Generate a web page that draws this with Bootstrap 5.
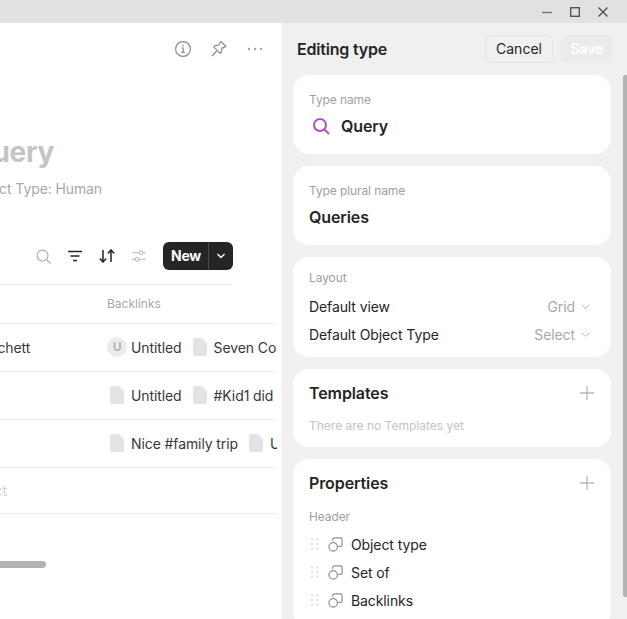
<!DOCTYPE html>
<html lang="en">
<head>
    <meta charset="UTF-8">
    <meta name="viewport" content="width=device-width, initial-scale=1.0">
    <title>Editing type</title>
    <link href="https://cdn.jsdelivr.net/npm/bootstrap@5.3.0/dist/css/bootstrap.min.css" rel="stylesheet">
    <style>
        html, body { height: 100%; overflow: hidden; }
        body { font-family: Inter, "Liberation Sans", sans-serif; font-size: 14px; letter-spacing: -0.1px; color: #252525; background: #f0f0f0; }
        svg { display: block; flex: none; }
        .app-shell { height: 619px; }
        .title-strip { height: 23px; background: #e1e1e1; padding-right: 19px; gap: 18px; }
        .work-area { height: 596px; }

        .main-pane { width: 281px; background: #fff; overflow: hidden; }
        .top-actions { height: 52px; padding-right: 17px; gap: 18px; }
        .page-head { margin-left: -29px; white-space: nowrap; height: 127px; padding-top: 60px; }
        .page-name { font-size: 28px; line-height: 34px; font-weight: 700; color: #c4c4c4; letter-spacing: -0.3px; margin: 0; }
        .page-sub { font-size: 14px; line-height: 20px; color: #a8a8a8; margin-top: 10px; margin-left: -53px; }
        .view-tools { width: 233px; height: 28px; margin-top: 40px; }
        .new-split { background: #252525; color: #fff; border-radius: 6px; height: 28px; width: 70px; font-weight: 700; letter-spacing: -0.2px; }
        .new-label { width: 46px; padding-left: 1px; text-align: center; border-right: 1px solid #4a4a4a; line-height: 28px; }
        .tool-gap { gap: 17px; margin-right: 17px; }
        .view-rule { width: 233px; border-top: 1px solid #ececec; margin-top: 14px; }
        .grid-box { width: 277px; overflow: hidden; }
        .grid-line { height: 48px; padding-bottom: 1px; border-bottom: 1px solid #ececec; white-space: nowrap; }
        .grid-head { height: 39px; font-size: 12px; letter-spacing: 0; color: #a8a8a8; padding-left: 107px; }
        .name-cell { width: 107px; flex: none; color: #383838; }
        .link-cell { color: #383838; }
        .link-cell > span { margin-right: 8px; }
        .u-avatar { width: 20px; height: 20px; border-radius: 50%; background: #ececec; color: #b0b0b0; font-size: 12px; font-weight: 600; line-height: 20px; text-align: center; margin-right: 4px; }
        .doc-ico { margin-left: 3px; margin-right: 7px; }
        .add-line { height: 46px; color: #cfcfcf; white-space: nowrap; }
        .h-thumb { width: 46px; height: 7px; background: #b2b2b2; border-radius: 0 4px 4px 0; margin-top: 47px; }

        .side-pane { width: 346px; position: relative; border-left: 1px solid #f6f6f6; padding: 0 16px 0 11px; }
        .side-head { height: 52px; margin-right: -2px; }
        .side-title { font-size: 16px; font-weight: 600; letter-spacing: -0.2px; color: #252525; margin-left: 4px; }
        .btn-cancel { height: 28px; width: 68px; padding: 0 0 1px; font-size: 14px; border: 1px solid #e3e3e3; border-radius: 6px; color: #252525; background: transparent; }
        .btn-save { height: 28px; width: 52px; padding: 0 0 1px; font-size: 14px; font-weight: 600; border: 0; border-radius: 6px; color: #fff; background: #ebebeb; margin-left: 8px; }
        .panel-box { width: 318px; background: #fff; border-radius: 16px; padding: 16px; margin-bottom: 12px; }
        .panel-tight { padding-top: 12px; padding-bottom: 8px; }
        .panel-mid { padding-top: 12px; padding-bottom: 12px; }
        .mini-label { font-size: 12px; line-height: 18px; color: #a0a0a0; }
        .big-value { font-size: 16px; line-height: 24px; font-weight: 600; color: #252525; }
        .value-gap { margin-top: 5px; }
        .panel-title { font-size: 16px; line-height: 24px; font-weight: 600; color: #252525; }
        .opt-head { margin-bottom: 6px; }
        .opt-line { height: 28px; padding-bottom: 2px; }
        .opt-val { color: #a8a8a8; gap: 6px; margin-right: 5px; }
        .none-yet { font-size: 12px; line-height: 18px; letter-spacing: 0; color: #c4c4c4; margin-top: 12px; }
        .prop-head { margin-top: 13px; margin-bottom: 5px; }
        .prop-line { height: 28px; padding-bottom: 2px; }
        .prop-ico { margin-left: 1px; }
        .v-thumb { position: absolute; right: 0; top: 52px; width: 4px; height: 522px; background: #b2b2b2; border-radius: 2px 0 0 2px; }
    </style>
</head>
<body>
    <div class="app-shell d-flex flex-column">
        <div class="title-strip d-flex align-items-center justify-content-end">
            <svg width="10" height="10" viewBox="0 0 10 10"><path d="M0 5.5h10" stroke="#777" stroke-width="1.4"/></svg>
            <svg width="10" height="10" viewBox="0 0 10 10"><rect x=".7" y=".7" width="8.6" height="8.6" fill="none" stroke="#555" stroke-width="1.4"/></svg>
            <svg width="10" height="10" viewBox="0 0 10 10"><path d="M.5.5l9 9M9.500.5l-9 9" stroke="#444" stroke-width="1.1"/></svg>
        </div>

        <div class="work-area d-flex">
            <div class="main-pane">
                <div class="top-actions d-flex align-items-center justify-content-end">
                    <svg width="18" height="18" viewBox="0 0 18 18" fill="none" stroke="#8a8a8a" stroke-width="1.2"><circle cx="9" cy="9" r="7.400"/><path d="M7.500 8h1.700v4.300M7.300 12.400h3.600" /><path d="M9 5v1.300" stroke-width="1.500"/></svg>
                    <svg width="18" height="18" viewBox="0 0 18 18" fill="none" stroke="#8a8a8a" stroke-width="1.2" stroke-linejoin="round"><path d="M11 1.500l5 5-1.300.6-2.700 1-.6 4-1.200 1.200-6.500-6.500L4.900 5.600l4-.6 1.400-2.700z"/><path d="M6.700 11l-4.700 5"/></svg>
                    <svg width="18" height="18" viewBox="0 0 18 18" fill="#a6a6a6"><circle cx="3" cy="9" r="1.200"/><circle cx="9" cy="9" r="1.200"/><circle cx="15" cy="9" r="1.200"/></svg>
                </div>
                <div class="page-head">
                    <h1 class="page-name">Query</h1>
                    <div class="page-sub">Default Object Type: Human</div>
                </div>
                <div class="view-tools d-flex align-items-center justify-content-end">
                    <div class="tool-gap d-flex align-items-center">
                        <svg width="15" height="15" viewBox="0 0 16 16" fill="none" stroke="#ababab" stroke-width="1.200"><circle cx="7" cy="7" r="5.800"/><path d="M11.200 11.200l4.300 4.300"/></svg>
                        <svg width="14" height="12" viewBox="0 0 14 12" fill="none" stroke="#252525" stroke-width="1.500"><path d="M0 1.500h14M2.500 6h9M5 10.500h4"/></svg>
                        <svg width="16" height="14" viewBox="0 0 16 14" fill="none" stroke="#252525" stroke-width="1.500"><path d="M4 1v12M.8 9.500L4 13l3.200-3.500M12 13V1M8.800 4.500L12 1l3.200 3.500"/></svg>
                        <svg width="14" height="14" viewBox="0 0 15 14" fill="none" stroke="#b8b8b8" stroke-width="1.100"><path d="M0 3.500h7.500M11.500 3.500H15M0 10.500h3.500M7.500 10.500H15"/><circle cx="9.500" cy="3.500" r="2"/><circle cx="5.500" cy="10.500" r="2"/></svg>
                    </div>
                    <div class="new-split d-flex align-items-center">
                        <div class="new-label">New</div>
                        <div class="flex-grow-1 d-flex justify-content-center">
                            <svg width="10" height="6" viewBox="0 0 10 6" fill="none" stroke="#fff" stroke-width="1.400"><path d="M1.500 1L5 4.500 8.500 1"/></svg>
                        </div>
                    </div>
                </div>
                <div class="view-rule"></div>
                <div class="grid-box">
                    <div class="grid-line grid-head d-flex align-items-center">Backlinks</div>
                    <div class="grid-line d-flex align-items-center">
                        <div class="name-cell"><span class="d-block" style="margin-left:-67px">Terry Pratchett</span></div>
                        <div class="link-cell d-flex align-items-center">
                            <div class="u-avatar">U</div><span>Untitled</span>
                            <svg class="doc-ico" width="14" height="18" viewBox="0 0 14 18"><path d="M2 0h7l5 5v11a2 2 0 0 1-2 2H2a2 2 0 0 1-2-2V2a2 2 0 0 1 2-2z" fill="#e4e4e4"/></svg><span>Seven Colors</span>
                        </div>
                    </div>
                    <div class="grid-line d-flex align-items-center">
                        <div class="name-cell"></div>
                        <div class="link-cell d-flex align-items-center">
                            <svg class="doc-ico" width="14" height="18" viewBox="0 0 14 18"><path d="M2 0h7l5 5v11a2 2 0 0 1-2 2H2a2 2 0 0 1-2-2V2a2 2 0 0 1 2-2z" fill="#e4e4e4"/></svg><span>Untitled</span>
                            <svg class="doc-ico" width="14" height="18" viewBox="0 0 14 18"><path d="M2 0h7l5 5v11a2 2 0 0 1-2 2H2a2 2 0 0 1-2-2V2a2 2 0 0 1 2-2z" fill="#e4e4e4"/></svg><span>#Kid1 did</span>
                        </div>
                    </div>
                    <div class="grid-line d-flex align-items-center">
                        <div class="name-cell"></div>
                        <div class="link-cell d-flex align-items-center">
                            <svg class="doc-ico" width="14" height="18" viewBox="0 0 14 18"><path d="M2 0h7l5 5v11a2 2 0 0 1-2 2H2a2 2 0 0 1-2-2V2a2 2 0 0 1 2-2z" fill="#e4e4e4"/></svg><span>Nice #family trip</span>
                            <svg class="doc-ico" width="14" height="18" viewBox="0 0 14 18"><path d="M2 0h7l5 5v11a2 2 0 0 1-2 2H2a2 2 0 0 1-2-2V2a2 2 0 0 1 2-2z" fill="#e4e4e4"/></svg><span>Untitled</span>
                        </div>
                    </div>
                    <div class="grid-line add-line d-flex align-items-center"><span class="d-block" style="margin-left:-67px">New object</span></div>
                </div>
                <div class="h-thumb"></div>
            </div>

            <div class="side-pane">
                <div class="side-head d-flex align-items-center">
                    <div class="side-title flex-grow-1">Editing type</div>
                    <button class="btn btn-cancel" type="button">Cancel</button>
                    <button class="btn btn-save" type="button">Save</button>
                </div>
                <div class="panel-box">
                    <div class="mini-label">Type name</div>
                    <div class="d-flex align-items-center gap-2 value-gap">
                        <svg width="24" height="24" viewBox="0 0 24 24" fill="none" stroke="#b14fc8" stroke-width="2"><circle cx="11" cy="11" r="6"/><path d="M15.500 15.500L20 20"/></svg>
                        <div class="big-value">Query</div>
                    </div>
                </div>
                <div class="panel-box">
                    <div class="mini-label">Type plural name</div>
                    <div class="big-value value-gap">Queries</div>
                </div>
                <div class="panel-box panel-tight">
                    <div class="mini-label opt-head">Layout</div>
                    <div class="opt-line d-flex align-items-center justify-content-between">
                        <span>Default view</span>
                        <span class="opt-val d-flex align-items-center">Grid <svg width="9" height="5" viewBox="0 0 9 5" fill="none" stroke="#bdbdbd"><path d="M.5.5l4 4 4-4"/></svg></span>
                    </div>
                    <div class="opt-line d-flex align-items-center justify-content-between">
                        <span>Default Object Type</span>
                        <span class="opt-val d-flex align-items-center">Select <svg width="9" height="5" viewBox="0 0 9 5" fill="none" stroke="#bdbdbd"><path d="M.5.5l4 4 4-4"/></svg></span>
                    </div>
                </div>
                <div class="panel-box panel-mid">
                    <div class="panel-title d-flex align-items-center justify-content-between">Templates
                        <svg width="16" height="16" viewBox="0 0 16 16" stroke="#b8b8b8" stroke-width="1.300"><path d="M8 1v14M1 8h14"/></svg>
                    </div>
                    <div class="none-yet">There are no Templates yet</div>
                </div>
                <div class="panel-box panel-mid">
                    <div class="panel-title d-flex align-items-center justify-content-between">Properties
                        <svg width="16" height="16" viewBox="0 0 16 16" stroke="#b8b8b8" stroke-width="1.300"><path d="M8 1v14M1 8h14"/></svg>
                    </div>
                    <div class="mini-label prop-head">Header</div>
                    <div class="prop-line d-flex align-items-center gap-2">
                        <svg width="10" height="12" viewBox="0 0 10 12" fill="#d4d4d4"><circle cx="3" cy="1.500" r="1"/><circle cx="8.500" cy="1.500" r="1"/><circle cx="3" cy="6" r="1"/><circle cx="8.500" cy="6" r="1"/><circle cx="3" cy="10.500" r="1"/><circle cx="8.500" cy="10.500" r="1"/></svg>
                        <svg class="prop-ico" width="15" height="15" viewBox="0 0 16 16" fill="none" stroke="#8f8f8f" stroke-width="1.300"><circle cx="5.500" cy="10.500" r="4.500"/><path d="M5 4V2.500A1.500 1.500 0 0 1 6.500 1h7A1.500 1.500 0 0 1 15 2.500v6a1.500 1.500 0 0 1-1.500 1.500H11"/></svg>
                        <span>Object type</span>
                    </div>
                    <div class="prop-line d-flex align-items-center gap-2">
                        <svg width="10" height="12" viewBox="0 0 10 12" fill="#d4d4d4"><circle cx="3" cy="1.500" r="1"/><circle cx="8.500" cy="1.500" r="1"/><circle cx="3" cy="6" r="1"/><circle cx="8.500" cy="6" r="1"/><circle cx="3" cy="10.500" r="1"/><circle cx="8.500" cy="10.500" r="1"/></svg>
                        <svg class="prop-ico" width="15" height="15" viewBox="0 0 16 16" fill="none" stroke="#8f8f8f" stroke-width="1.300"><circle cx="5.500" cy="10.500" r="4.500"/><path d="M5 4V2.500A1.500 1.500 0 0 1 6.500 1h7A1.500 1.500 0 0 1 15 2.500v6a1.500 1.500 0 0 1-1.500 1.500H11"/></svg>
                        <span>Set of</span>
                    </div>
                    <div class="prop-line d-flex align-items-center gap-2">
                        <svg width="10" height="12" viewBox="0 0 10 12" fill="#d4d4d4"><circle cx="3" cy="1.500" r="1"/><circle cx="8.500" cy="1.500" r="1"/><circle cx="3" cy="6" r="1"/><circle cx="8.500" cy="6" r="1"/><circle cx="3" cy="10.500" r="1"/><circle cx="8.500" cy="10.500" r="1"/></svg>
                        <svg class="prop-ico" width="15" height="15" viewBox="0 0 16 16" fill="none" stroke="#8f8f8f" stroke-width="1.300"><circle cx="5.500" cy="10.500" r="4.500"/><path d="M5 4V2.500A1.500 1.500 0 0 1 6.500 1h7A1.500 1.500 0 0 1 15 2.500v6a1.500 1.500 0 0 1-1.500 1.500H11"/></svg>
                        <span>Backlinks</span>
                    </div>
                </div>
                <div class="v-thumb"></div>
            </div>
        </div>
    </div>
    <script src="https://cdn.jsdelivr.net/npm/bootstrap@5.3.0/dist/js/bootstrap.bundle.min.js"></script>
</body>
</html>
